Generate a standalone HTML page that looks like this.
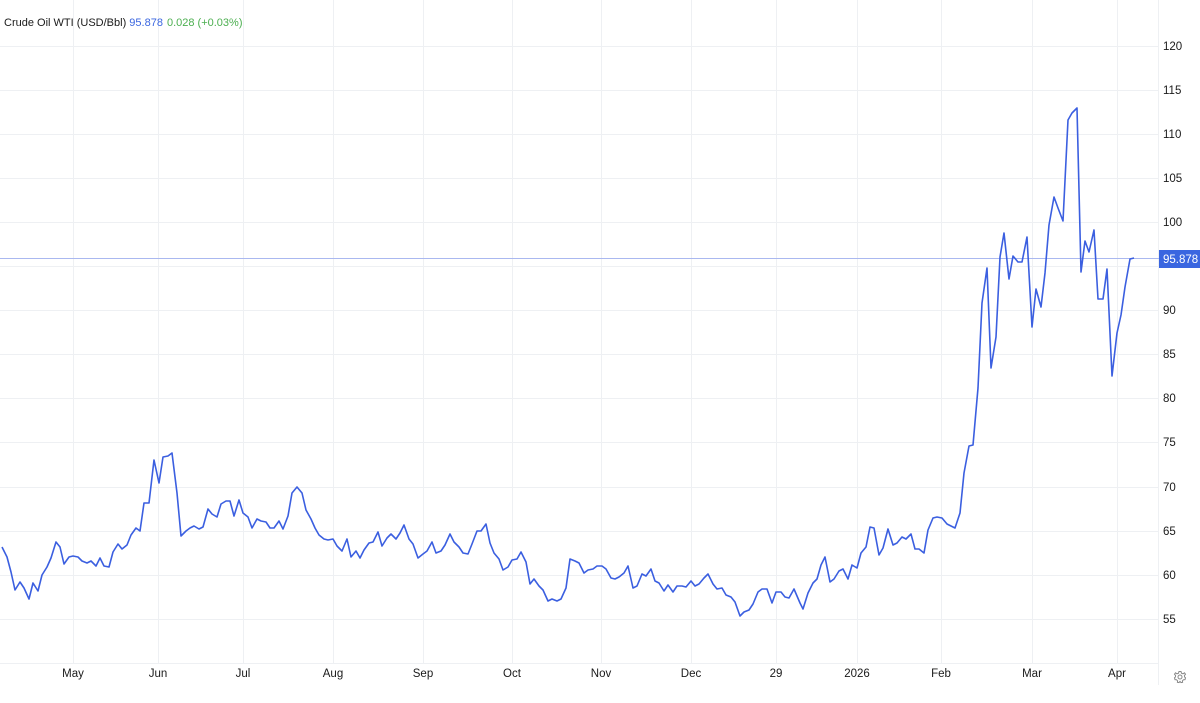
<!DOCTYPE html>
<html><head><meta charset="utf-8"><style>
html,body{margin:0;padding:0;background:#fff;width:1200px;height:703px;overflow:hidden;font-family:"Liberation Sans",Arial,sans-serif}
</style></head><body>
<svg width="1200" height="703" viewBox="0 0 1200 703" xmlns="http://www.w3.org/2000/svg" style="display:block">
<g stroke="#eef0f3" stroke-width="1">
<line x1="73.5" y1="0" x2="73.5" y2="663"/><line x1="158.5" y1="0" x2="158.5" y2="663"/><line x1="243.5" y1="0" x2="243.5" y2="663"/><line x1="333.5" y1="0" x2="333.5" y2="663"/><line x1="423.5" y1="0" x2="423.5" y2="663"/><line x1="512.5" y1="0" x2="512.5" y2="663"/><line x1="601.5" y1="0" x2="601.5" y2="663"/><line x1="691.5" y1="0" x2="691.5" y2="663"/><line x1="776.5" y1="0" x2="776.5" y2="663"/><line x1="857.5" y1="0" x2="857.5" y2="663"/><line x1="941.5" y1="0" x2="941.5" y2="663"/><line x1="1032.5" y1="0" x2="1032.5" y2="663"/><line x1="1117.5" y1="0" x2="1117.5" y2="663"/>
<line x1="0" y1="46.5" x2="1158" y2="46.5"/><line x1="0" y1="90.5" x2="1158" y2="90.5"/><line x1="0" y1="134.5" x2="1158" y2="134.5"/><line x1="0" y1="178.5" x2="1158" y2="178.5"/><line x1="0" y1="222.5" x2="1158" y2="222.5"/><line x1="0" y1="266.5" x2="1158" y2="266.5"/><line x1="0" y1="310.5" x2="1158" y2="310.5"/><line x1="0" y1="354.5" x2="1158" y2="354.5"/><line x1="0" y1="398.5" x2="1158" y2="398.5"/><line x1="0" y1="442.5" x2="1158" y2="442.5"/><line x1="0" y1="487.5" x2="1158" y2="487.5"/><line x1="0" y1="531.5" x2="1158" y2="531.5"/><line x1="0" y1="575.5" x2="1158" y2="575.5"/><line x1="0" y1="619.5" x2="1158" y2="619.5"/>
<line x1="0" y1="663.5" x2="1158" y2="663.5"/>
<line x1="1158.5" y1="0" x2="1158.5" y2="685"/>
</g>
<line x1="0" y1="258.5" x2="1160" y2="258.5" stroke="#aab8f0" stroke-width="1"/>
<polyline fill="none" stroke="#3b5fe0" stroke-width="1.6" stroke-linejoin="round" points="2,547 7,557 11,572 15,590 20,582 24,588 29,599 33,583 38,591 42,575 47,567 51,558 56,542 60,547 64,564 69,557 73,556 78,557 82,561 87,563 91,561 96,566 100,558 104,566 109,567 113,552 118,544 122,549 127,545 131,535 136,528 140,531 144,503 149,503 154,460 159,483 163,457 168,456 172,453 177,493 181,536 186,531 190,528 194,526 199,529 203,527 208,509 212,514 217,517 221,504 226,501 230,501 234,516 239,500 243,513 248,517 252,528 257,519 261,521 266,522 270,528 274,528 279,521 283,529 288,516 292,493 297,487 302,493 306,510 311,519 315,528 319,535 324,539 328,540 333,539 337,546 342,551 347,539 351,557 356,551 360,558 364,550 369,543 373,542 378,532 382,546 387,538 391,534 396,539 400,533 404,525 409,539 413,544 418,558 423,554 427,551 432,542 436,553 441,551 445,545 450,534 454,542 459,547 463,553 468,554 472,544 477,531 481,531 486,524 490,543 494,553 499,559 503,570 508,567 512,560 517,559 521,552 526,562 530,584 534,579 539,586 543,590 548,601 552,599 557,601 561,599 566,588 570,559 575,561 579,563 584,573 588,570 593,569 597,566 602,566 606,569 611,578 615,579 619,577 624,573 628,566 633,588 637,586 642,574 646,576 651,569 655,581 659,583 664,591 668,585 673,592 677,586 682,586 686,587 691,581 695,586 699,584 704,578 708,574 713,584 717,589 722,588 726,595 731,597 735,602 740,616 744,612 749,610 753,604 758,592 762,589 767,589 772,603 776,592 781,592 785,597 789,598 794,589 800,603 803,609 808,593 813,583 817,579 821,565 825,557 830,582 834,579 839,571 843,569 848,579 852,565 857,568 861,553 866,547 870,527 874,528 879,555 883,548 888,529 893,545 897,543 902,537 906,539 911,534 915,549 919,549 924,553 928,530 933,518 937,517 942,518 947,524 951,526 955,528 960,513 964,473 969,446 973,445 978,388 982,303 987,268 991,368 996,337 1000,257 1004,233 1009,279 1013,256 1018,262 1022,262 1027,237 1032,327 1036,289 1041,307 1045,273 1049,225 1054,197 1058,208 1063,221 1068,120 1072,113 1077,108 1081,272 1085,241 1089,252 1094,230 1098,299 1103,299 1107,269 1112,376 1117,333 1121,315 1125,287 1130,259 1134,258"/>
<g font-size="11.5" fill="#1a1a1a" font-family="Liberation Sans,Arial,sans-serif">
<text x="1163" y="50">120</text><text x="1163" y="94">115</text><text x="1163" y="138">110</text><text x="1163" y="182">105</text><text x="1163" y="226">100</text><text x="1163" y="314">90</text><text x="1163" y="358">85</text><text x="1163" y="402">80</text><text x="1163" y="446">75</text><text x="1163" y="491">70</text><text x="1163" y="535">65</text><text x="1163" y="579">60</text><text x="1163" y="623">55</text>
<g text-anchor="middle"><text x="73" y="677">May</text><text x="158" y="677">Jun</text><text x="243" y="677">Jul</text><text x="333" y="677">Aug</text><text x="423" y="677">Sep</text><text x="512" y="677">Oct</text><text x="601" y="677">Nov</text><text x="691" y="677">Dec</text><text x="776" y="677">29</text><text x="857" y="677">2026</text><text x="941" y="677">Feb</text><text x="1032" y="677">Mar</text><text x="1117" y="677">Apr</text></g>
</g>
<rect x="1159" y="250" width="41" height="18" fill="#3a66e0"/>
<text x="1163" y="263" font-size="11.5" fill="#fff">95.878</text>
<text x="4" y="26" font-size="11" fill="#1a1a1a">Crude Oil WTI (USD/Bbl) <tspan fill="#3a66e0">95.878</tspan><tspan fill="#4caf50" dx="4">0.028 (+0.03%)</tspan></text>
<g transform="translate(1180,677)" fill="none" stroke="#888" stroke-width="1">
<circle r="2"/>
<path d="M-1,-5.5 L1,-5.5 L1.5,-3.8 L3,-3.2 L4.5,-4.2 L5.5,-2.8 L4.4,-1.4 L4.6,0 L5.5,0.8 L5,2.6 L3.5,2.7 L2.4,3.9 L2.6,5.3 L1,5.6 L0,4.4 L-1,5.6 L-2.6,5.3 L-2.4,3.9 L-3.5,2.7 L-5,2.6 L-5.5,0.8 L-4.6,0 L-4.4,-1.4 L-5.5,-2.8 L-4.5,-4.2 L-3,-3.2 L-1.5,-3.8 Z"/>
</g>
</svg>
</body></html>
